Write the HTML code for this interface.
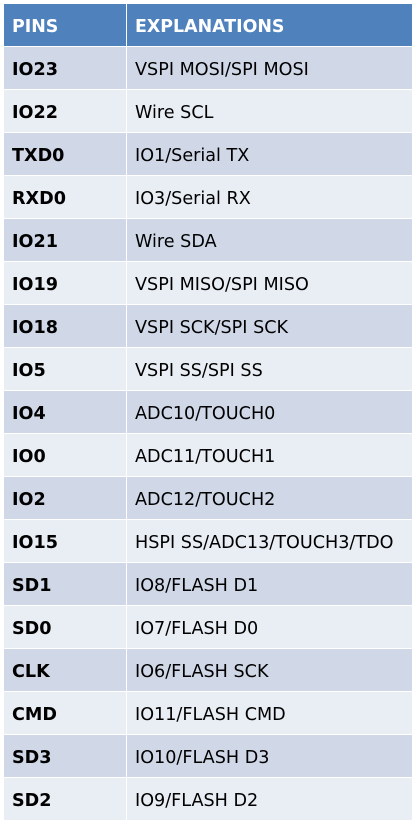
<!DOCTYPE html><html><head><style>
body{margin:0;background:#fff;width:417px;height:825px;overflow:hidden}
table{position:absolute;left:4px;top:4px;border-collapse:separate;border-spacing:0;font-family:"DejaVu Sans","Liberation Sans",sans-serif;font-size:17.6px;color:#000}
td,th{padding:4px 0 0 8px;border-right:1px solid #fff;border-bottom:1px solid #fff;text-align:left;box-sizing:border-box}
th{background:#4F81BD;color:#fff;font-weight:bold;font-size:17.4px}
td:first-child,th:first-child{width:123px;font-weight:bold}
td:last-child,th:last-child{width:285px;border-right:none}
tr:nth-child(odd) td{background:#D0D8E8}
tr:nth-child(even) td{background:#E9EDF4}
thead tr{height:43px}
tbody tr{height:43px}
</style></head><body><table>
<thead><tr><th>PINS</th><th>EXPLANATIONS</th></tr></thead><tbody>
<tr><td>IO23</td><td>VSPI MOSI/SPI MOSI</td></tr>
<tr><td>IO22</td><td>Wire SCL</td></tr>
<tr><td>TXD0</td><td>IO1/Serial TX</td></tr>
<tr><td>RXD0</td><td>IO3/Serial RX</td></tr>
<tr><td>IO21</td><td>Wire SDA</td></tr>
<tr><td>IO19</td><td>VSPI MISO/SPI MISO</td></tr>
<tr><td>IO18</td><td>VSPI SCK/SPI SCK</td></tr>
<tr><td>IO5</td><td>VSPI SS/SPI SS</td></tr>
<tr><td>IO4</td><td>ADC10/TOUCH0</td></tr>
<tr><td>IO0</td><td>ADC11/TOUCH1</td></tr>
<tr><td>IO2</td><td>ADC12/TOUCH2</td></tr>
<tr><td>IO15</td><td>HSPI SS/ADC13/TOUCH3/TDO</td></tr>
<tr><td>SD1</td><td>IO8/FLASH D1</td></tr>
<tr><td>SD0</td><td>IO7/FLASH D0</td></tr>
<tr><td>CLK</td><td>IO6/FLASH SCK</td></tr>
<tr><td>CMD</td><td>IO11/FLASH CMD</td></tr>
<tr><td>SD3</td><td>IO10/FLASH D3</td></tr>
<tr><td>SD2</td><td>IO9/FLASH D2</td></tr>
</tbody></table></body></html>
